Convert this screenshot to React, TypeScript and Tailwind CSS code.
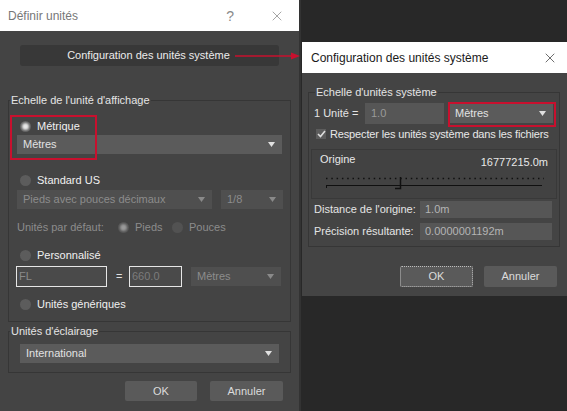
import { X } from "lucide-react";

const font = "font-['Liberation_Sans',Arial,sans-serif]";

function Radio({ on = false, dim = false }: { on?: boolean; dim?: boolean }) {
  return (
    <div
      className={`relative h-[11px] w-[11px] shrink-0 rounded-full ${dim ? "bg-[#525252]" : "bg-[#5c5c5c]"}`}
    >
      {on && (
        <div
          className={`absolute left-[2px] top-[2px] h-[7px] w-[7px] rounded-full blur-[1px] ${
            dim ? "bg-[#9a9a9a]" : "bg-[#e8e8e8]"
          }`}
        />
      )}
    </div>
  );
}

function Caret({ dim = false }: { dim?: boolean }) {
  return (
    <svg width="7" height="5" viewBox="0 0 7 5" className="shrink-0">
      <path d="M0 0 L7 0 L3.5 5 Z" fill={dim ? "#8a8a8a" : "#e0e0e0"} />
    </svg>
  );
}

function Select({
  label,
  className = "",
  dim = false,
}: {
  label: string;
  className?: string;
  dim?: boolean;
}) {
  return (
    <div
      className={`flex items-center justify-between whitespace-nowrap pl-[6px] pr-[7px] ${
        dim ? "bg-[#4f4f4f] text-[#8c8c8c]" : "bg-[#5b5b5b] text-[#e2e2e2]"
      } ${className}`}
    >
      <span>{label}</span>
      <Caret dim={dim} />
    </div>
  );
}

function Button({ label, focus = false, className = "" }: { label: string; focus?: boolean; className?: string }) {
  return (
    <div
      className={`flex items-center justify-center rounded-[2px] bg-[#5a5a5a] text-[#dcdcdc] ${
        focus ? "outline-1 outline-dotted outline-[#bdbdbd] -outline-offset-1" : ""
      } ${className}`}
    >
      {label}
    </div>
  );
}

function LeftDialog() {
  return (
    <div className="relative flex w-[301px] shrink-0 flex-col border-r-[2px] border-[#333]">
      {/* title bar */}
      <div className="flex h-[31px] items-center bg-white pl-[8px] text-[12px] text-[#777]">
        <span className="flex-1">Définir unités</span>
        <span className="mr-[35px] text-[14px] text-[#8a8a8a]">?</span>
        <X size={16} strokeWidth={1} className="mr-[14px] text-[#777]" />
      </div>

      <div className="flex flex-1 flex-col bg-[#444] px-[8px] pt-[14px]">
        <div className="mx-[12px] flex h-[21px] items-center justify-center rounded-[3px] bg-[#383838] pr-[2px] text-[#ececec]">
          Configuration des unités système
        </div>

        <fieldset className="relative mt-[27px] border border-[#363636] pb-[9px]">
          <legend className="ml-[1px] px-[1px] leading-[14px] text-[#e4e4e4]">Echelle de l'unité d'affichage</legend>

          {/* red highlight annotation */}
          <div className="pointer-events-none absolute left-[1px] top-[8px] h-[45px] w-[87px] border-[2px] border-[#c8102e]" />

          <div className="mt-[11px] flex h-[16px] items-center gap-[6px] pl-[11px] text-[#f0f0f0]">
            <Radio on />
            <span>Métrique</span>
          </div>
          <Select label="Mètres" className="mx-[8px] mt-[1px] h-[19px]" />

          <div className="mt-[18px] flex h-[16px] items-center gap-[6px] pl-[11px] text-[#f0f0f0]">
            <Radio />
            <span>Standard US</span>
          </div>
          <div className="mt-[2px] flex gap-[9px] pl-[8px] pr-[7px]">
            <Select label="Pieds avec pouces décimaux" dim className="h-[19px] w-[195px]" />
            <Select label="1/8" dim className="h-[19px] flex-1" />
          </div>

          <div className="mt-[10px] flex h-[16px] items-center whitespace-nowrap pl-[8px] text-[#8c8c8c]">
            <span className="w-[101px]">Unités par défaut:</span>
            <Radio on dim />
            <span className="ml-[6px] w-[37px]">Pieds</span>
            <Radio dim />
            <span className="ml-[6px]">Pouces</span>
          </div>

          <div className="mt-[12px] flex h-[16px] items-center gap-[6px] pl-[11px] text-[#f0f0f0]">
            <Radio />
            <span>Personnalisé</span>
          </div>
          <div className="mt-[3px] flex h-[21px] items-center pl-[7px] pr-[9px]">
            <div className="flex h-[21px] w-[91px] items-center border border-[#e6e6e6] bg-[#4a4a4a] pl-[2px] text-[#8a8a8a]">
              FL
            </div>
            <span className="ml-[9px] w-[13px] text-[#e0e0e0]">=</span>
            <div className="flex h-[21px] w-[53px] items-center border border-[#e6e6e6] bg-[#4a4a4a] pl-[2px] text-[#7c7c7c]">
              660.0
            </div>
            <Select label="Mètres" dim className="ml-[9px] h-[19px] flex-1" />
          </div>

          <div className="mt-[9px] flex h-[16px] items-center gap-[6px] pl-[11px] text-[#f0f0f0]">
            <Radio />
            <span>Unités génériques</span>
          </div>
        </fieldset>

        <fieldset className="mt-[2px] border border-[#363636] pb-[9px]">
          <legend className="ml-[1px] px-[1px] leading-[14px] text-[#e4e4e4]">Unités d'éclairage</legend>
          <Select label="International" className="mx-[11px] mt-[6px] h-[19px]" />
        </fieldset>

        <div className="mt-[8px] flex justify-end gap-[13px] pr-[8px]">
          <Button label="OK" className="h-[20px] w-[72px]" />
          <Button label="Annuler" className="h-[20px] w-[73px]" />
        </div>
      </div>

      {/* red arrow annotation */}
      <svg className="pointer-events-none absolute left-[235px] top-[51px]" width="70" height="10" viewBox="0 0 70 10">
        <line x1="0" y1="5" x2="58" y2="5" stroke="#c8102e" strokeWidth="1.5" />
        <path d="M56 1.5 L65 5 L56 8.5 Z" fill="#c8102e" />
      </svg>
    </div>
  );
}

function Slider() {
  return (
    <svg width="242" height="20" viewBox="0 0 242 20" className="mt-[5px]">
      <line x1="14" y1="5.5" x2="232" y2="5.5" stroke="#101010" strokeWidth="1.5" strokeDasharray="1.5 3.8" />
      <line x1="14" y1="12.5" x2="230" y2="12.5" stroke="#101010" strokeWidth="1" />
      <line x1="14.5" y1="12" x2="14.5" y2="15" stroke="#101010" strokeWidth="1" />
      <path d="M88.5 4 L88.5 15.5 L83 15.5" stroke="#101010" strokeWidth="1.5" fill="none" />
    </svg>
  );
}

function RightDialog() {
  return (
    <div className="ml-[1px] flex h-[254px] flex-col">
      <div className="flex h-[31px] items-center bg-white pl-[9px] text-[12px] text-[#1a1a1a]">
        <span className="flex-1">Configuration des unités système</span>
        <X size={16} strokeWidth={1} className="mr-[9px] text-[#222]" />
      </div>

      <div className="flex flex-1 flex-col bg-[#444] pl-[6px] pt-[12px]">
        <fieldset className="relative mr-[7px] border border-[#363636] pb-[6px]">
          <legend className="ml-[6px] px-[1px] leading-[14px] text-[#e4e4e4]">Echelle d'unités système</legend>

          <div className="pointer-events-none absolute left-[139px] top-[3px] h-[25px] w-[108px] border-[2px] border-[#c8102e]" />

          <div className="ml-[5px] mr-[6px] mt-[4px] flex h-[21px] items-center whitespace-nowrap">
            <span className="w-[51px] text-[#e4e4e4]">1 Unité =</span>
            <div className="flex h-[21px] w-[79px] items-center bg-[#565656] pl-[6px] text-[#9a9a9a]">1.0</div>
            <Select label="Mètres" className="ml-[5px] h-[19px] flex-1" />
          </div>

          <div className="ml-[7px] mt-[3px] flex h-[14px] items-center gap-[4px] whitespace-nowrap text-[#e8e8e8]">
            <div className="flex h-[10px] w-[10px] items-center justify-center bg-[#5c5c5c]">
              <svg width="9" height="8" viewBox="0 0 9 8">
                <path d="M1 4 L3.5 6.5 L8 1" stroke="#dedede" strokeWidth="1.6" fill="none" />
              </svg>
            </div>
            <span className="tracking-[-0.15px]">Respecter les unités système dans les fichiers</span>
          </div>

          <div className="mx-[2px] mt-[8px] h-[50px] border border-[#393939] bg-[#424242] pt-[4px]">
            <div className="flex items-start justify-between whitespace-nowrap pl-[8px] pr-[8px] text-[#e8e8e8]">
              <span>Origine</span>
              <span className="mt-[3px]">16777215.0m</span>
            </div>
            <Slider />
          </div>

          <div className="ml-[5px] mr-[7px] mt-[2px] flex h-[17px] items-center whitespace-nowrap">
            <span className="w-[106px] text-[#e4e4e4]">Distance de l'origine:</span>
            <div className="flex h-[17px] flex-1 items-center bg-[#565656] pl-[5px] text-[#b4b4b4]">1.0m</div>
          </div>
          <div className="ml-[5px] mr-[7px] mt-[5px] flex h-[17px] items-center whitespace-nowrap">
            <span className="w-[106px] text-[#e4e4e4]">Précision résultante:</span>
            <div className="flex h-[17px] flex-1 items-center bg-[#565656] pl-[5px] text-[#b4b4b4]">0.0000001192m</div>
          </div>
        </fieldset>

        <div className="mt-[19px] flex justify-end gap-[11px] pr-[10px]">
          <Button label="OK" focus className="h-[21px] w-[73px]" />
          <Button label="Annuler" className="h-[21px] w-[73px]" />
        </div>
      </div>
    </div>
  );
}

export default function App() {
  return (
    <div className={`${font} flex h-[411px] w-[567px] overflow-hidden bg-[#282828] text-[11px] leading-none`}>
      <LeftDialog />
      <div className="flex-1 pt-[42px]">
        <RightDialog />
      </div>
    </div>
  );
}
